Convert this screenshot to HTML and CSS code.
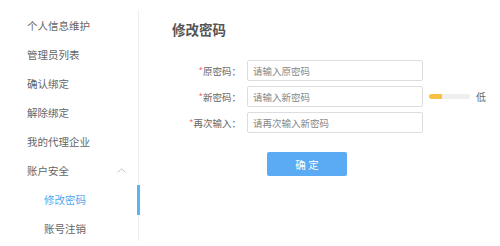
FILE: index.html
```html
<!DOCTYPE html>
<html lang="zh-CN">
<head>
    <title>修改密码</title>

    <link rel="stylesheet" href="styles.css">

</head>
<body>

    <div class="sidebar">
      <div class="menu-item">个人信息维护</div>
      <div class="menu-item">管理员列表</div>
      <div class="menu-item">确认绑定</div>
      <div class="menu-item">解除绑定</div>
      <div class="menu-item">我的代理企业</div>
      <div class="menu-item menu-group">
        账户安全
        <svg class="chevron" width="9" height="5" viewBox="0 0 9 5">
          <path d="M0.5 4.5 L4.5 0.8 L8.5 4.5" fill="none" stroke="#c4c4c4" stroke-width="1"/>
        </svg>
      </div>
      <div class="menu-item sub-item active">修改密码</div>
      <div class="menu-item sub-item">账号注销</div>
    </div>

    <div class="main">
      <p class="title">修改密码</p>

      <div class="form">
        <div class="form-row">
          <label class="form-label"><span class="required">*</span>原密码：</label>
          <input class="form-input" type="password" placeholder="请输入原密码">
        </div>

        <div class="form-row">
          <label class="form-label"><span class="required">*</span>新密码：</label>
          <input class="form-input" type="password" placeholder="请输入新密码">
          <div class="strength">
            <span class="strength-bar filled"></span>
            <span class="strength-bar"></span>
            <span class="strength-bar"></span>
          </div>
          <span class="strength-text">低</span>
        </div>

        <div class="form-row">
          <label class="form-label"><span class="required">*</span>再次输入：</label>
          <input class="form-input" type="password" placeholder="请再次输入新密码">
        </div>

        <button class="submit-button">确 定</button>
      </div>
    </div>

</body>
</html>
```

FILE: styles.css
```css
body {
  margin: 0;
  background-color: white;
  font-family: "Noto Sans CJK SC", "Noto Sans", sans-serif;
  color: #666;
  display: flex;
  align-items: flex-start;
  height: 246px;
  overflow: hidden;
}

.sidebar {
  box-sizing: border-box;
  width: 139px;
  height: 231px;
  margin-top: 10px;
  padding-top: 1px;
  border-right: 1px solid #eeeeee;
  flex-shrink: 0;
}

.menu-item {
  position: relative;
  height: 29px;
  line-height: 29px;
  padding-left: 27px;
  font-size: 10.5px;
  color: #666;
}

.menu-group {
  display: flex;
  align-items: center;
}

.chevron {
  margin-left: auto;
  margin-right: 12px;
}

.sub-item {
  padding-left: 44px;
}

.active {
  color: #4ea8ef;
}

.active::after {
  content: "";
  position: absolute;
  right: -2px;
  top: 0;
  width: 3px;
  height: 30px;
  background-color: #5bb4f3;
}

.main {
  padding-left: 33px;
}

.title {
  margin: 19px 0 0;
  line-height: 20px;
  font-size: 13.5px;
  font-weight: bold;
  color: #555;
}

.form {
  margin-top: 21px;
}

.form-row {
  display: flex;
  align-items: center;
  margin-bottom: 5px;
}

.form-label {
  width: 69px;
  margin-right: 6px;
  text-align: right;
  font-size: 9.5px;
  color: #666;
}

.required {
  color: #f26b6b;
}

.form-input {
  box-sizing: border-box;
  width: 176px;
  height: 21px;
  padding: 0 5px;
  border: 1px solid #dddddd;
  border-radius: 2px;
  font-family: "Noto Sans CJK SC", "Noto Sans", sans-serif;
  font-size: 9.5px;
  outline: none;
}

.form-input::placeholder {
  color: #888;
}

.strength {
  display: flex;
  margin-left: 6px;
  width: 41px;
  height: 5px;
  border-radius: 3px;
  overflow: hidden;
  background-color: #f0f0f0;
}

.strength-bar {
  flex: 1;
  background-color: #efefef;
  margin-right: 1px;
}

.strength-bar:last-child {
  margin-right: 0;
}

.strength-bar.filled {
  background-color: #f8c146;
}

.strength-text {
  margin-left: 6px;
  font-size: 10px;
  color: #666;
}

.submit-button {
  margin-top: 14px;
  margin-left: 95px;
  width: 80px;
  height: 24px;
  border: none;
  border-radius: 2px;
  background-color: #5aabf3;
  color: white;
  font-family: "Noto Sans CJK SC", "Noto Sans", sans-serif;
  font-size: 10.5px;
  cursor: pointer;
}
```
